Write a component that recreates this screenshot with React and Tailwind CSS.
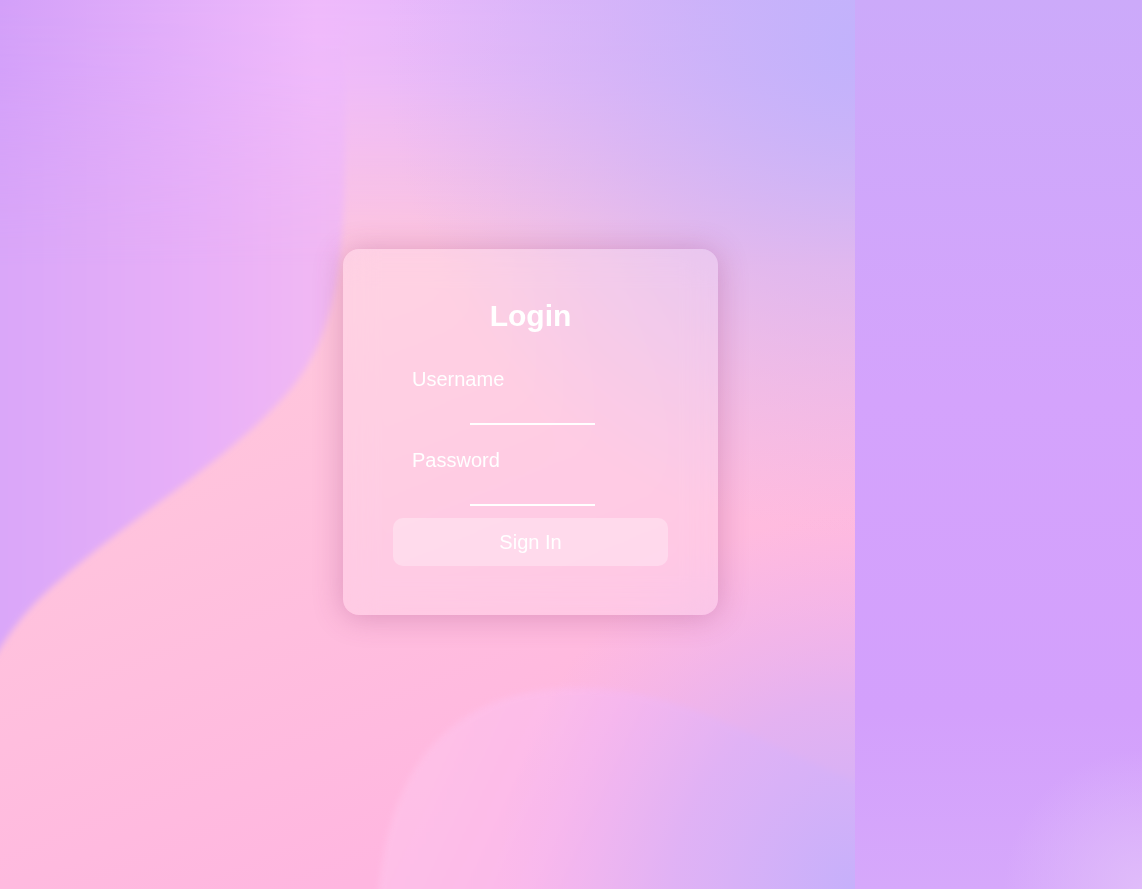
import { useState } from 'react'

// background painting, approximating the original wallpaper image
function Backdrop() {
    return (
        <svg
            className="absolute top-0 left-0 h-[889px] w-[855px]"
            viewBox="0 0 855 889"
            preserveAspectRatio="none"
        >
            <defs>
                <linearGradient id="pinkBase" x1="0" y1="0" x2="0.4" y2="1">
                    <stop offset="0" stopColor="#fcc6e6" />
                    <stop offset="0.45" stopColor="#ffc6dc" />
                    <stop offset="1" stopColor="#ffb6e0" />
                </linearGradient>
                <linearGradient id="leftSide" x1="0" y1="0" x2="1" y2="0">
                    <stop offset="0" stopColor="#d9a6f9" />
                    <stop offset="0.6" stopColor="#e8b0f8" />
                    <stop offset="1" stopColor="#f3baf2" />
                </linearGradient>
                <linearGradient id="topBand" x1="0" y1="0" x2="1" y2="0">
                    <stop offset="0" stopColor="#d3a0f9" />
                    <stop offset="0.37" stopColor="#efbafb" />
                    <stop offset="0.7" stopColor="#dcb6fb" />
                    <stop offset="1" stopColor="#bcb2fc" />
                </linearGradient>
                <linearGradient id="topFade" x1="0" y1="0" x2="0" y2="1">
                    <stop offset="0" stopColor="white" stopOpacity="1" />
                    <stop offset="0.08" stopColor="white" stopOpacity="0.9" />
                    <stop offset="0.3" stopColor="white" stopOpacity="0" />
                </linearGradient>
                <mask id="topMask">
                    <rect width="855" height="889" fill="url(#topFade)" />
                </mask>
                <radialGradient id="topRight" cx="1" cy="0.05" r="0.55">
                    <stop offset="0" stopColor="#c2b2fc" stopOpacity="1" />
                    <stop offset="0.5" stopColor="#d0b2f8" stopOpacity="0.6" />
                    <stop offset="1" stopColor="#d8b4f6" stopOpacity="0" />
                </radialGradient>
                <radialGradient id="botRight" cx="1" cy="1" r="0.42">
                    <stop offset="0" stopColor="#c6b0fb" stopOpacity="1" />
                    <stop offset="0.5" stopColor="#d8b0f8" stopOpacity="0.7" />
                    <stop offset="1" stopColor="#e8b2f4" stopOpacity="0" />
                </radialGradient>
                <linearGradient id="blobB" x1="0" y1="0" x2="1" y2="0.2">
                    <stop offset="0" stopColor="#ffc6e6" />
                    <stop offset="0.5" stopColor="#fcbaee" />
                    <stop offset="1" stopColor="#e6b4f6" />
                </linearGradient>
                <filter id="soft" x="-5%" y="-5%" width="110%" height="110%">
                    <feGaussianBlur stdDeviation="3" />
                </filter>
            </defs>
            <rect width="855" height="889" fill="url(#pinkBase)" />
            <path
                filter="url(#soft)"
                d="M-10 -10 L345 -10 L345 110 C346 250 340 330 290 390 C230 460 140 510 60 580 C30 605 10 630 -10 665 Z"
                fill="url(#leftSide)"
            />
            <path
                filter="url(#soft)"
                d="M378 900 C385 800 420 730 500 700 C560 680 630 685 700 712 C760 735 810 765 865 785 L865 900 Z"
                fill="url(#blobB)"
                opacity="0.8"
            />
            <rect width="855" height="889" fill="url(#topBand)" mask="url(#topMask)" />
            <rect width="855" height="889" fill="url(#topRight)" />
            <rect width="855" height="889" fill="url(#botRight)" />
        </svg>
    )
}

export default function App() {
    const [username, setUsername] = useState("")
    const [password, setPassword] = useState("")

    return (
        <div className="relative w-full h-[889px] overflow-hidden font-['Liberation_Sans',Arial,sans-serif] bg-[linear-gradient(180deg,#ccaafa_0%,#d4a3fc_45%,#d3a0fc_80%,#d6a8fb_100%)]">
            <Backdrop />
            {/* right strip highlight */}
            <div className="absolute right-0 bottom-0 w-[140px] h-[140px] bg-[radial-gradient(circle_at_100%_100%,#e0bcfa_0%,rgba(224,188,250,0)_70%)]" />

            <div className="relative flex pl-[343px] pt-[249px]">
                <div className="w-[375px] h-[366px] rounded-2xl bg-white/20 backdrop-blur-lg shadow-[0_2px_30px_rgba(140,50,110,0.3)] pt-[48px]">
                    <h1 className="text-center text-white text-[30px] leading-[37px] font-bold">Login</h1>

                    <div className="mt-[34px]">
                        <label className="block pl-[69px] text-white text-[20px] leading-[23px]">Username</label>
                        <input
                            value={username}
                            onChange={e => setUsername(e.target.value)}
                            className="block ml-[127px] w-[125px] h-[34px] bg-transparent border-b-2 border-white text-white outline-none"
                        />
                    </div>

                    <div className="mt-[24px]">
                        <label className="block pl-[69px] text-white text-[20px] leading-[23px]">Password</label>
                        <input
                            type="password"
                            value={password}
                            onChange={e => setPassword(e.target.value)}
                            className="block ml-[127px] w-[125px] h-[34px] bg-transparent border-b-2 border-white text-white outline-none"
                        />
                    </div>

                    <button className="block mx-[50px] mt-[12px] w-[275px] h-[48px] rounded-[10px] bg-white/30 text-white text-[20px]">
                        Sign In
                    </button>
                </div>
            </div>
        </div>
    )
}
